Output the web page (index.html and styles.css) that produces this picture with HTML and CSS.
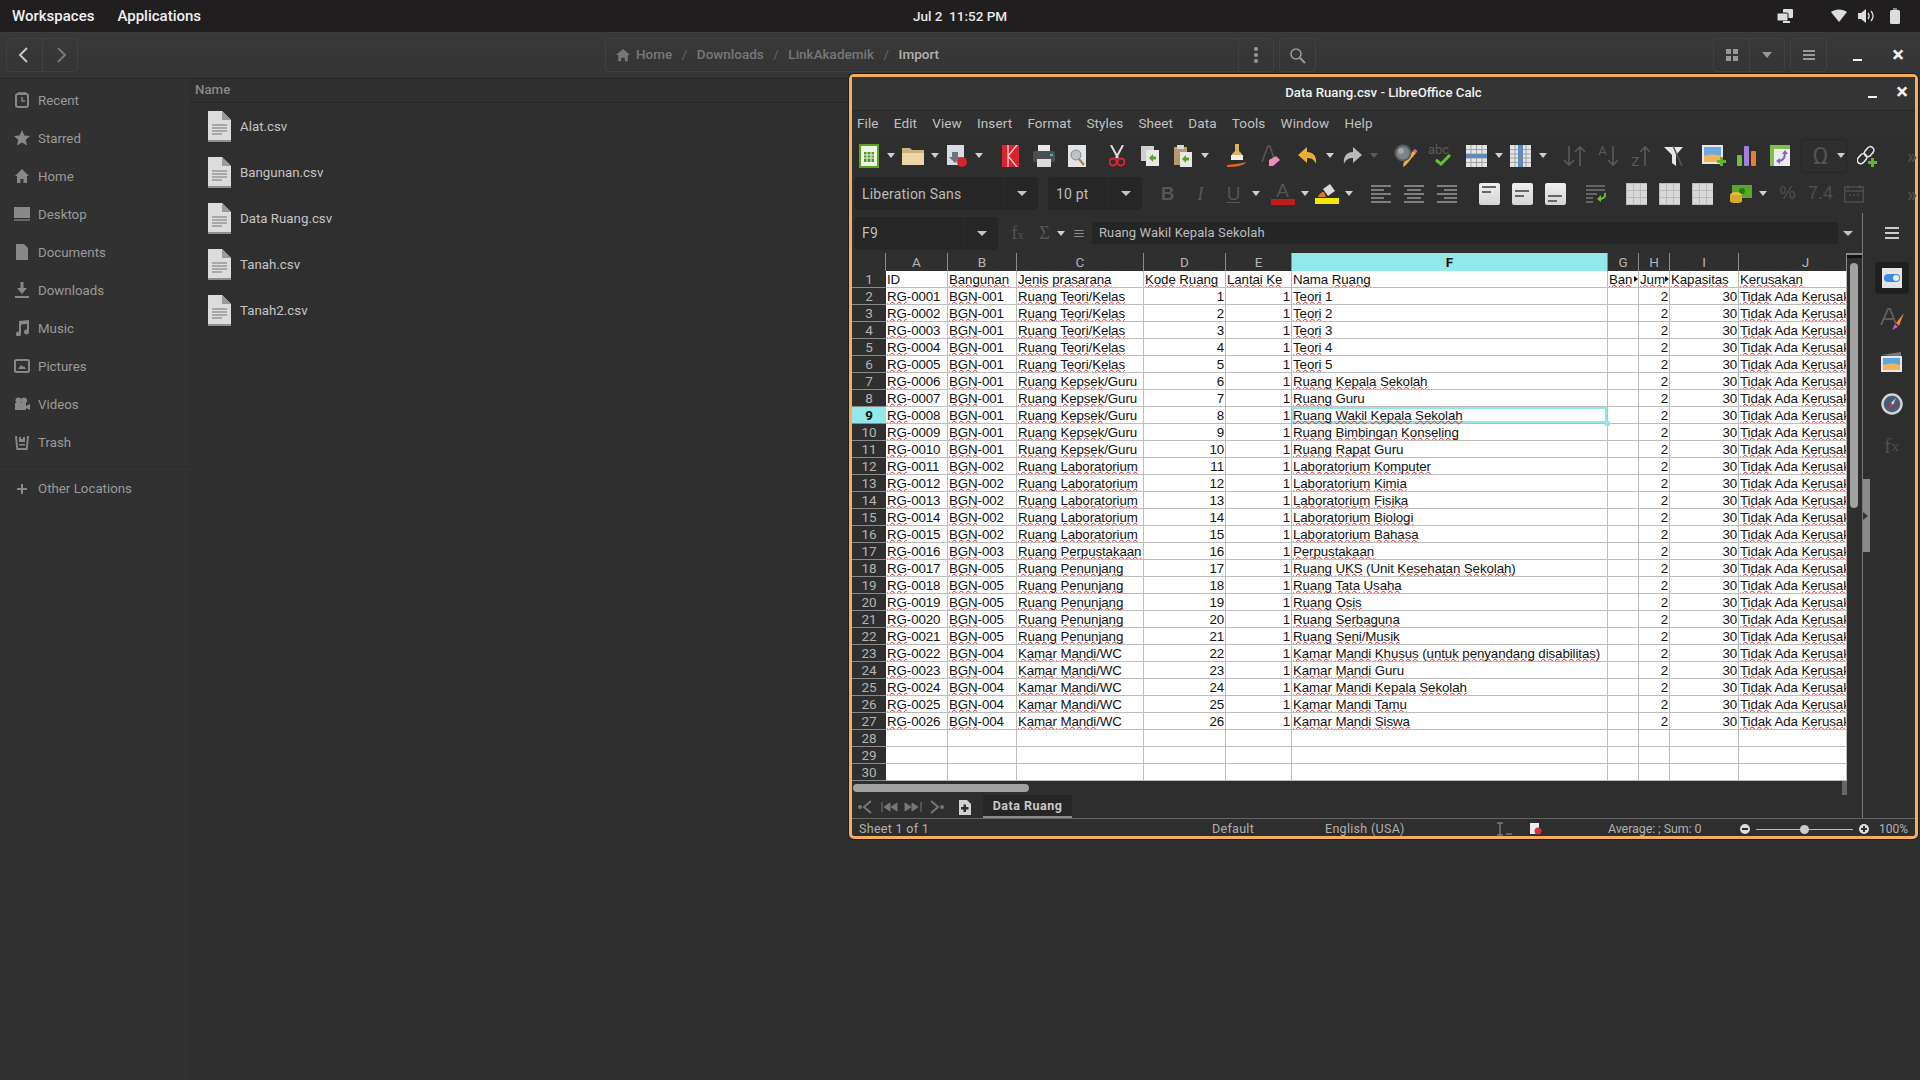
FILE: index.html
```html
<!DOCTYPE html>
<html lang="en">
<head>
  <meta charset="UTF-8">
  <title>Data Ruang.csv - LibreOffice Calc</title>
  <link rel="stylesheet" href="styles.css">
</head>
<body>
  <div class="topbar">
    <div class="top-left"><span>Workspaces</span><span>Applications</span></div>
    <div class="clock">Jul 2&nbsp; 11:52 PM</div>
    <div class="tray">
      <svg class="tray-screens" width="16" height="16" viewBox="0 0 16 16"><rect x="6" y="1" width="10" height="9" rx="1" fill="#ddd"/><rect x="0" y="5" width="11" height="8" rx="1" fill="#ddd" stroke="#201e1f"/><rect x="6" y="13" width="7" height="2" fill="#ddd"/></svg>
      <svg class="tray-wifi" width="16" height="16" viewBox="0 0 16 16"><path d="M0 4c4-3.500 12-3.500 16 0l-8 10z" fill="#ddd"/></svg>
      <svg class="tray-vol" width="17" height="16" viewBox="0 0 17 16"><path d="M0 5h3l5-4v14l-5-4H0z" fill="#ddd"/><path d="M10 5c1.500 2 1.500 4 0 6M13 3c2.500 3 2.500 7 0 10" fill="none" stroke="#ddd" stroke-width="1.300"/></svg>
      <svg class="tray-bat" width="10" height="16" viewBox="0 0 10 16"><rect x="3" y="0" width="4" height="2" fill="#888"/><rect x="0" y="2" width="10" height="14" rx="1.500" fill="#ddd"/></svg>
    </div>
  </div>

  <div class="headerbar">
    <div class="btn-group nav-btns">
      <div class="hbtn back"><svg width="12" height="18" viewBox="0 0 12 18"><path d="M10 2L3 9l7 7" fill="none" stroke="#c4c4c4" stroke-width="2"/></svg></div>
      <div class="hbtn fwd"><svg width="12" height="18" viewBox="0 0 12 18"><path d="M2 2l7 7-7 7" fill="none" stroke="#777" stroke-width="2"/></svg></div>
    </div>
    <div class="pathbar">
      <svg class="path-home" width="14" height="14" viewBox="0 0 16 16"><path d="M8 1L0 8h2.500v7H6v-4h4v4h3.500V8H16z" fill="#777"/></svg>
      <span class="crumb">Home</span><span class="slash">/</span>
      <span class="crumb">Downloads</span><span class="slash">/</span>
      <span class="crumb">LinkAkademik</span><span class="slash">/</span>
      <span class="crumb current">Import</span>
      <div class="path-menu"><svg width="6" height="18" viewBox="0 0 6 18"><circle cx="3" cy="3" r="2" fill="#999"/><circle cx="3" cy="9" r="2" fill="#999"/><circle cx="3" cy="15" r="2" fill="#999"/></svg></div>
    </div>
    <div class="btn-group search-btn"><div class="hbtn wide"><svg width="17" height="17" viewBox="0 0 17 17"><circle cx="7" cy="7" r="5" fill="none" stroke="#999" stroke-width="1.600"/><path d="M11 11l5 5" stroke="#999" stroke-width="2"/></svg></div></div>
    <div class="btn-group view-btns">
      <div class="hbtn"><svg width="12" height="12" viewBox="0 0 12 12"><rect width="5" height="5" fill="#999"/><rect x="7" width="5" height="5" fill="#999"/><rect y="7" width="5" height="5" fill="#999"/><rect x="7" y="7" width="5" height="5" fill="#999"/></svg></div>
      <div class="hbtn"><svg width="10" height="6" viewBox="0 0 10 6"><path d="M0 0h10L5 6z" fill="#999"/></svg></div>
    </div>
    <div class="btn-group menu-btn"><div class="hbtn wide"><svg width="12" height="12" viewBox="0 0 12 12"><path d="M0 1h12v2H0zM0 5h12v2H0zM0 9h12v2H0z" fill="#999"/></svg></div></div>
    <div class="wm-min"></div>
    <div class="wm-close">×</div>
  </div>

  <div class="files">
    <nav class="places">
      <div class="place"><svg width="16" height="16" viewBox="0 0 16 16"><rect x="2" y="2" width="12" height="13" rx="2" fill="none" stroke="#888" stroke-width="2"/><path d="M5 0h6v2H5zM8 5v4h3" fill="none" stroke="#888" stroke-width="1.500"/></svg>Recent</div>
      <div class="place"><svg width="16" height="16" viewBox="0 0 16 16"><path d="M8 0l2.400 5.400 5.600.6-4.200 3.800 1.200 5.800L8 12.600l-5 3 1.200-5.800L0 6l5.600-.6z" fill="#888"/></svg>Starred</div>
      <div class="place"><svg width="16" height="16" viewBox="0 0 16 16"><path d="M8 1L1 8h2v7h3.500v-4h3v4H13V8h2z" fill="#888"/></svg>Home</div>
      <div class="place"><svg width="16" height="16" viewBox="0 0 16 16"><rect y="1" width="16" height="11" fill="#888"/><rect y="13" width="16" height="2" fill="#666"/></svg>Desktop</div>
      <div class="place"><svg width="16" height="16" viewBox="0 0 16 16"><path d="M2 0h8l4 4v12H2z" fill="#888"/></svg>Documents</div>
      <div class="place"><svg width="16" height="16" viewBox="0 0 16 16"><path d="M6.500 0h3v6H13l-5 6-5-6h3.500zM1 14h14v2H1z" fill="#888"/></svg>Downloads</div>
      <div class="place"><svg width="16" height="16" viewBox="0 0 16 16"><path d="M5 1l10-1v12a2.500 2.500 0 1 1-2-2.400V4L7 4.600V14a2.500 2.500 0 1 1-2-2.400z" fill="#888"/></svg>Music</div>
      <div class="place"><svg width="16" height="16" viewBox="0 0 16 16"><rect x="1" y="2" width="14" height="12" rx="1.500" fill="none" stroke="#888" stroke-width="2"/><path d="M4 11l3-4 2 2 1-1 2 3z" fill="#888"/></svg>Pictures</div>
      <div class="place"><svg width="16" height="16" viewBox="0 0 16 16"><circle cx="4.500" cy="4.500" r="3" fill="#888"/><circle cx="10" cy="4.500" r="3" fill="#888"/><path d="M1 7h11v7H1zM12 10l4-2v6l-4-2z" fill="#888"/></svg>Videos</div>
      <div class="place"><svg width="16" height="16" viewBox="0 0 16 16"><path d="M1 2h2l1 12h8l1-12h2l-1.400 14H2.400z M5 3h2v2h2V3h2v5H5zM5 10h6v1.500H5z" fill="#888"/></svg>Trash</div>
      <div class="place other"><svg width="16" height="16" viewBox="0 0 16 16"><path d="M7 3h2v4h4v2H9v4H7V9H3V7h4z" fill="#888"/></svg>Other Locations</div>
    </nav>
    <main class="file-list">
      <div class="list-head">Name</div>
      <div class="file"><svg class="page" width="24" height="31" viewBox="0 0 24 31"><use href="#doc"/></svg>Alat.csv</div>
      <div class="file"><svg class="page" width="24" height="31" viewBox="0 0 24 31"><use href="#doc"/></svg>Bangunan.csv</div>
      <div class="file"><svg class="page" width="24" height="31" viewBox="0 0 24 31"><use href="#doc"/></svg>Data Ruang.csv</div>
      <div class="file"><svg class="page" width="24" height="31" viewBox="0 0 24 31"><use href="#doc"/></svg>Tanah.csv</div>
      <div class="file"><svg class="page" width="24" height="31" viewBox="0 0 24 31"><use href="#doc"/></svg>Tanah2.csv</div>
    </main>
  </div>

  <svg width="0" height="0" class="defs">
    <symbol id="doc" viewBox="0 0 24 31">
      <path d="M1 0h14l9 9v22H1z" fill="#dcdcdc"/>
      <path d="M1 29h23v2H1z" fill="#8e8e8e"/>
      <path d="M15 0l9 9h-9z" fill="#9a9a9a"/>
      <path d="M5 14h15M5 17h15M5 20h15M5 23h10" stroke="#777" stroke-width="1"/>
    </symbol>
  </svg>

  <!-- LibreOffice window sits on top of the file manager -->
  <section class="calc">
    <div class="calc-title">
      <span></span>
      <span class="calc-name">Data Ruang.csv - LibreOffice Calc</span>
      <div class="calc-wm"><div class="wm-min"></div><div class="wm-close">×</div></div>
    </div>
    <div class="menubar">
      <span>File</span><span>Edit</span><span>View</span><span>Insert</span><span>Format</span><span>Styles</span><span>Sheet</span><span>Data</span><span>Tools</span><span>Window</span><span>Help</span>
    </div>

    <div class="toolbar">
      <div class="tb"><svg width="20" height="24" viewBox="0 0 20 24"><rect x="1" y="1" width="18" height="22" fill="#eef5e6" stroke="#5aa51e" stroke-width="2"/><path d="M5 8h10v10H5z" fill="#4e9a28"/><path d="M5 11h10M5 14h10M8 8v10M12 8v10" stroke="#eef5e6"/></svg></div><div class="arr"></div>
      <div class="tb"><svg width="24" height="20" viewBox="0 0 24 20"><path d="M1 2h8l2 2h12v15H1z" fill="#cdb17f"/><path d="M1 7h22v12H1z" fill="#ecd6a8"/></svg></div><div class="arr"></div>
      <div class="tb"><svg width="24" height="24" viewBox="0 0 24 24"><rect x="2" y="1" width="17" height="20" fill="#d8dde3"/><path d="M7 8h6v5h3l-6 6-6-6h3z" fill="#6b7580"/><circle cx="17" cy="18" r="5" fill="#d8232f"/></svg></div><div class="arr"></div>
      <div class="sep"></div>
      <div class="tb"><svg width="17" height="22" viewBox="0 0 17 22"><rect width="17" height="22" fill="#d92532"/><path d="M6 0v22M6 11L15 0M6 11l9 11" fill="none" stroke="#f4d9d9" stroke-width="1.200"/></svg></div>
      <div class="tb"><svg width="22" height="22" viewBox="0 0 22 22"><rect x="5" y="0" width="12" height="7" fill="#e8e8e8"/><rect y="6" width="22" height="11" rx="2" fill="#4a4f54"/><rect x="17" y="9" width="3" height="2" fill="#31c4c9"/><rect x="4" y="14" width="14" height="8" fill="#dcdcdc"/></svg></div>
      <div class="tb"><svg width="18" height="22" viewBox="0 0 18 22"><rect width="18" height="22" fill="#e4e4e4"/><circle cx="8" cy="10" r="5" fill="#bcc3c9" stroke="#8a8a8a"/><path d="M11 14l5 6" stroke="#a57c4b" stroke-width="2"/></svg></div>
      <div class="sep7"></div>
      <div class="tb"><svg width="16" height="22" viewBox="0 0 16 22"><path d="M2 0l7 13M14 0L7 13" stroke="#dcdcdc" stroke-width="2"/><circle cx="4" cy="17" r="3.500" fill="none" stroke="#d92532" stroke-width="2"/><circle cx="12" cy="17" r="3.500" fill="none" stroke="#d92532" stroke-width="2"/></svg></div>
      <div class="tb"><svg width="18" height="20" viewBox="0 0 18 20"><rect width="13" height="15" fill="#cfcfcf"/><rect x="5" y="4" width="13" height="16" fill="#e8e8e8"/><path d="M8 12l4-4v2.500h3v3h-3V16z" fill="#58a12b"/></svg></div>
      <div class="tb"><svg width="18" height="22" viewBox="0 0 18 22"><rect y="2" width="13" height="18" fill="#b79a6a"/><rect x="3" y="0" width="7" height="4" fill="#d6d6d6"/><rect x="6" y="7" width="12" height="15" fill="#e8e8e8"/><path d="M8 14l4-4v2.500h3v3h-3V18z" fill="#58a12b"/></svg></div><div class="arr"></div>
      <div class="sep"></div>
      <div class="tb"><svg width="20" height="24" viewBox="0 0 20 24"><path d="M8 0h4v7l3 3v5H5v-5l3-3z" fill="#d9b45c"/><rect x="4" y="11" width="12" height="5" fill="#eee"/><path d="M0 21c5-1 12-1 19-3-2 4-10 5-19 5z" fill="#e0651c"/></svg></div>
      <div class="tb"><svg width="20" height="22" viewBox="0 0 20 22"><path d="M2 17L8 1h2l5 16" fill="none" stroke="#5a5a5a" stroke-width="1.500"/><path d="M9 15l7-4 4 4-7 6H9z" fill="#f08ac0"/></svg></div>
      <div class="gap"></div>
      <div class="tb"><svg width="22" height="20" viewBox="0 0 22 20"><path d="M10 1L1 9l9 8v-5c4 0 7 1 9 6 1-8-3-12-9-12z" fill="#e9b031"/></svg></div><div class="arr"></div>
      <div class="tb"><svg width="22" height="20" viewBox="0 0 22 20"><path d="M12 1l9 8-9 8v-5c-4 0-7 1-9 6-1-8 3-12 9-12z" fill="#b9b9b9"/></svg></div><div class="arr dim"></div>
      <div class="sep"></div>
      <div class="tb"><svg width="24" height="24" viewBox="0 0 24 24"><path d="M22 9L12 21l-3 2 .5-4L19 7z" fill="#eeb13d"/><path d="M19 7l3 2 1.500-2-3-2z" fill="#e86a9a"/><circle cx="9" cy="9" r="7.500" fill="#7d8388" stroke="#5c5c5c" stroke-width="2"/><circle cx="7" cy="7" r="3" fill="#a0a6ab"/></svg></div>
      <div class="tb tb-spell"><span class="abc">abc</span><svg width="16" height="12" viewBox="0 0 16 12"><path d="M1 6l5 4 9-9" fill="none" stroke="#6cc02c" stroke-width="3"/></svg></div>
      <div class="gap"></div>
      <div class="tb"><svg width="21" height="22" viewBox="0 0 21 22"><rect width="21" height="22" fill="#e4e4e4"/><rect y="9" width="21" height="4" fill="#4d8bd6"/><path d="M0 4.500h21M0 9h21M0 13h21M0 17.500h21M5 0v22M10.500 0v22M16 0v22" stroke="#8a8a8a" stroke-width=".700"/></svg></div><div class="arr"></div>
      <div class="tb"><svg width="21" height="22" viewBox="0 0 21 22"><rect width="21" height="22" fill="#e4e4e4"/><rect x="8" width="5" height="22" fill="#4d8bd6"/><path d="M0 4.500h21M0 9h21M0 13h21M0 17.500h21M5 0v22M10.500 0v22M16 0v22" stroke="#8a8a8a" stroke-width=".700"/></svg></div><div class="arr"></div>
      <div class="sep"></div>
      <div class="tb"><svg width="24" height="22" viewBox="0 0 24 22"><path d="M6 1v19M1 15l5 5 5-5M17 21V2M12 7l5-5 5 5" fill="none" stroke="#5a5a5a" stroke-width="1.600"/></svg></div>
      <div class="tb tb-sort"><span>A</span><svg width="12" height="22" viewBox="0 0 12 22"><path d="M6 1v19M1 15l5 5 5-5" fill="none" stroke="#5a5a5a" stroke-width="1.600"/></svg></div>
      <div class="tb tb-sort"><span class="low">Z</span><svg width="12" height="22" viewBox="0 0 12 22"><path d="M6 21V2M1 7l5-5 5 5" fill="none" stroke="#5a5a5a" stroke-width="1.600"/></svg></div>
      <div class="tb"><svg width="20" height="20" viewBox="0 0 20 20"><path d="M0 1h19l-7 8v11l-4-3V9z" fill="#e6e6e6"/><path d="M9 0l9 20" stroke="#555" stroke-width="1.500"/></svg></div>
      <div class="sep7"></div>
      <div class="tb"><svg width="24" height="22" viewBox="0 0 24 22"><rect x="0" y="0" width="21" height="19" fill="#e8e8e8"/><rect x="2" y="2" width="17" height="15" fill="#6aaae0"/><path d="M2 11c6-2 11-2 17 0v6H2z" fill="#efb45c"/><path d="M18 12h3v3h3v3h-3v3h-3v-3h-3v-3h3z" fill="#62b62e"/></svg></div>
      <div class="tb"><svg width="20" height="20" viewBox="0 0 20 20"><rect y="9" width="5" height="11" rx="1" fill="#6fbf3a"/><rect x="7" y="0" width="5" height="20" rx="1" fill="#a67ee0"/><rect x="14" y="5" width="5" height="15" rx="1" fill="#e8802a"/></svg></div>
      <div class="tb"><svg width="20" height="21" viewBox="0 0 20 21"><rect width="20" height="21" fill="#ececec"/><path d="M0 0h20v4H0zM0 0h4v21H0z" fill="#7fbf4d"/><path d="M8 16c5 0 7-3 7-8" fill="none" stroke="#8b5fd0" stroke-width="2"/><path d="M12 9l3-4 3 4zM10 13v6l-4-3z" fill="#8b5fd0"/></svg></div>
      <div class="gap"></div>
      <div class="omega"><span class="omega-sign">Ω</span><div class="arr"></div></div>
      <div class="tb tb-last"><svg width="22" height="22" viewBox="0 0 22 22"><rect x="9" y="1" width="7" height="11" rx="3.500" transform="rotate(40 12 6)" fill="none" stroke="#e6e6e6" stroke-width="1.600"/><rect x="2" y="8" width="7" height="11" rx="3.500" transform="rotate(40 5 13)" fill="none" stroke="#e6e6e6" stroke-width="1.600"/><path d="M14 13h3v3h3v3h-3v3h-3v-3h-3v-3h3z" fill="#62b62e"/></svg></div>
      <div class="more">»</div>
    </div>

    <div class="toolbar toolbar2">
      <div class="combo font-box"><span>Liberation Sans</span><i></i></div>
      <div class="combo size-box"><span>10 pt</span><i></i></div>
      <div class="tb fmt bold">B</div>
      <div class="tb fmt ital">I</div>
      <div class="tb fmt undl">U</div><div class="arr"></div>
      <div class="gap"></div>
      <div class="tb color"><span class="fmt">A</span><b class="swatch red"></b></div><div class="arr"></div>
      <div class="tb color"><svg width="20" height="14" viewBox="0 0 20 14"><path d="M6 5l7-5 5 7-7 5z" fill="#d9d9d9"/><path d="M1 13c1-3 3-5 6-5l2 5z" fill="#e0762a"/></svg><b class="swatch yellow"></b></div><div class="arr"></div>
      <div class="sep"></div>
      <div class="tb"><svg width="20" height="18" viewBox="0 0 20 18"><path d="M0 1h20M0 5h13M0 9h20M0 13h13M0 17h20" stroke="#999" stroke-width="1.500"/></svg></div>
      <div class="tb"><svg width="20" height="18" viewBox="0 0 20 18"><path d="M0 1h20M3 5h14M0 9h20M3 13h14M0 17h20" stroke="#999" stroke-width="1.500"/></svg></div>
      <div class="tb"><svg width="20" height="18" viewBox="0 0 20 18"><path d="M0 1h20M7 5h13M0 9h20M7 13h13M0 17h20" stroke="#999" stroke-width="1.500"/></svg></div>
      <div class="sep"></div>
      <div class="tb"><div class="vbox top"><s></s><s></s></div></div>
      <div class="tb"><div class="vbox mid"><s></s><s></s></div></div>
      <div class="tb"><div class="vbox bot"><s></s><s></s></div></div>
      <div class="sep7"></div>
      <div class="tb"><svg width="20" height="18" viewBox="0 0 20 18"><path d="M0 1h19M0 5h19M0 9h11M0 13h7M0 17h7" stroke="#777" stroke-width="1.500"/><path d="M19 8c1 4-2 6-6 6" fill="none" stroke="#6cc02c" stroke-width="2"/><path d="M15 10l-4 4 4 3z" fill="#6cc02c"/></svg></div>
      <div class="sep8"></div>
      <div class="tb"><div class="cellbox"></div></div>
      <div class="tb"><div class="cellbox"></div></div>
      <div class="tb"><div class="cellbox"></div></div>
      <div class="gap"></div>
      <div class="tb"><svg width="22" height="18" viewBox="0 0 22 18"><rect x="2" y="0" width="20" height="13" fill="#56a72c"/><circle cx="12" cy="6" r="3" fill="#2f7418"/><ellipse cx="6" cy="10" rx="6" ry="3" fill="#e5bd43"/><path d="M0 10v6c0 3 12 3 12 0v-6z" fill="#d8a92e"/></svg></div><div class="arr"></div>
      <div class="tb dim-text pct">%</div>
      <div class="tb dim-text">7.4</div>
      <div class="tb"><svg width="20" height="18" viewBox="0 0 20 18"><rect x=".7" y="2" width="18.600" height="15" fill="none" stroke="#4f4f4f" stroke-width="1.400"/><path d="M4 0v4M16 0v4M0 6h20M5 10h2M9 10h2M13 10h2" stroke="#4f4f4f" stroke-width="1.400"/></svg></div>
      <div class="more">»</div>
    </div>

    <div class="work">
      <div class="work-main">
        <div class="formula">
          <div class="combo name-box"><span>F9</span><i></i></div>
          <span class="fx-btn fx">f<small>x</small></span>
          <span class="fx-btn sum">Σ</span>
          <div class="arr"></div>
          <span class="fx-btn eq">≡</span>
          <div class="fx-input">Ruang Wakil Kepala Sekolah</div>
          <div class="fx-drop"></div>
        </div>
        <div class="sheet-row">
          <table class="sheet" id="sheet"></table>
          <div class="vscroll"><div class="split-v"></div><div class="vthumb"></div></div>
        </div>
        <div class="hscroll"><div class="hthumb"></div><div class="split-h"></div></div>
        <div class="tabs">
          <svg width="86" height="14" viewBox="0 0 86 14"><circle cx="2" cy="7" r="2" fill="#777"/><path d="M13 1L6 7l7 6" fill="none" stroke="#777" stroke-width="2"/><path d="M24 2v10M32 3l-6 4 6 4zM39 3l-6 4 6 4z" fill="#777" stroke="#777"/><path d="M47 3l6 4-6 4zM54 3l6 4-6 4zM63 2v10" fill="#777" stroke="#777"/><path d="M73 1l7 6-7 6" fill="none" stroke="#777" stroke-width="2"/><circle cx="84" cy="7" r="2" fill="#777"/></svg>
          <svg class="tab-add" width="13" height="15" viewBox="0 0 13 15"><path d="M1 0h8l4 4v11H1z" fill="#d2d2d2"/><path d="M5.500 4.500h2.500v2.500h2.500v2.500H8V12H5.500V9.500H3V7h2.500z" fill="#2e2e2e"/></svg>
          <div class="tab">Data Ruang</div>
        </div>
      </div>
      <aside class="deck">
        <svg class="deck-menu" width="14" height="12" viewBox="0 0 14 12"><path d="M0 0h14v2H0zM0 5h14v2H0zM0 10h14v2H0z" fill="#ccc"/></svg>
        <div class="deck-tab active"><svg width="20" height="20" viewBox="0 0 20 20"><rect width="20" height="20" fill="#e4e4e4"/><rect x="2" y="6" width="16" height="8" rx="4" fill="#3d8bdc"/><circle cx="14" cy="10" r="3" fill="#eee"/></svg></div>
        <div class="deck-tab"><svg width="24" height="26" viewBox="0 0 24 26"><path d="M1 18L8 2h2l6 15M4 12h9" fill="none" stroke="#5c5c5c" stroke-width="2"/><path d="M24 6l-8 10 3 3z" fill="#e28a3d"/><path d="M15 17l3 3-6 3z" fill="#c65ac0"/></svg></div>
        <div class="deck-tab"><svg width="22" height="20" viewBox="0 0 22 20"><path d="M0 3l20-3v5z" fill="#777"/><rect y="4" width="21" height="16" fill="#e8e8e8"/><rect x="2" y="6" width="17" height="12" fill="#5ca5de"/><path d="M2 13c6-2 11-2 17 0v5H2z" fill="#efb45c"/></svg></div>
        <div class="deck-tab"><svg width="22" height="22" viewBox="0 0 22 22"><circle cx="11" cy="11" r="9.500" fill="#4a5a78" stroke="#d2d2d2" stroke-width="2.500"/><path d="M15 5l-3 7-2-2z" fill="#d9d9d9"/><path d="M7 17l3-7 2 2z" fill="#d8382e"/></svg></div>
        <div class="deck-tab fx-dim">f<small>x</small></div>
        <div class="deck-handle"></div>
      </aside>
    </div>

    <div class="statusbar">
      <span>Sheet 1 of 1</span>
      <span>Default</span>
      <span>English (USA)</span>
      <span class="st-ins"><svg width="16" height="14" viewBox="0 0 16 14"><path d="M1 1h6M4 1v12M1 13h6M10 12h6" stroke="#999" fill="none"/></svg></span>
      <span class="st-doc"><svg width="12" height="12" viewBox="0 0 12 12"><rect width="9" height="11" fill="#eee"/><circle cx="8" cy="8" r="3.500" fill="#d8323c"/></svg></span>
      <span class="st-sum">Average: ; Sum: 0</span>
      <div class="zoom-ctl">
        <svg width="10" height="10" viewBox="0 0 10 10"><circle cx="5" cy="5" r="5" fill="#ddd"/><path d="M2 4h6v2H2z" fill="#2e2e2e"/></svg>
        <div class="slider"><b></b></div>
        <svg width="10" height="10" viewBox="0 0 10 10"><circle cx="5" cy="5" r="5" fill="#ddd"/><path d="M2 4h2V2h2v2h2v2H6v2H4V6H2z" fill="#2e2e2e"/></svg>
      </div>
      <span class="st-pct">100%</span>
    </div>
  </section>

  <script src="script.js"></script>
</body>
</html>
```

FILE: styles.css
```css
* { box-sizing: border-box; }
html, body { margin: 0; height: 100%; }
body { width: 1920px; height: 1080px; overflow: hidden; background: #2f2f2f; color: #999; font-family: Roboto, "Noto Sans", sans-serif; font-size: 14px; display: flex; flex-direction: column; }
svg { display: block; flex: none; }
.defs { position: absolute; }

/* gnome panel */
.topbar { height: 32px; flex: none; background: #201e1f; color: #f0f0f0; font-size: 15px; font-weight: 500; display: grid; grid-template-columns: 1fr auto 1fr; align-items: center; padding: 0 12px; }
.top-left { display: flex; gap: 23px; }
.clock { font-size: 13.5px; color: #e8e8e8; }
.tray { display: flex; align-items: center; justify-content: flex-end; padding-right: 8px; }
.tray-wifi { margin-left: 38px; }
.tray-vol { margin-left: 11px; }
.tray-bat { margin-left: 15px; }

/* nautilus header */
.headerbar { height: 47px; flex: none; background: linear-gradient(#393939, #343434); border-top: 1px solid #3c3c3c; border-bottom: 1px solid #262626; display: flex; align-items: center; padding: 0 0 1px 6px; }
.btn-group { height: 34px; display: flex; border: 1px solid #414141; border-radius: 4px; }
.hbtn { width: 35px; display: flex; align-items: center; justify-content: center; }
.hbtn + .hbtn { border-left: 1px solid #414141; }
.hbtn.back { padding-right: 3px; }
.hbtn.fwd { padding-left: 3px; }
.pathbar { width: 669px; height: 34px; margin-left: 527px; border: 1px solid #414141; border-radius: 4px; display: flex; align-items: center; padding-left: 10px; font-size: 13.5px; font-weight: 500; color: #777; }
.crumb { margin-bottom: 2px; }
.path-home { margin-right: 6px; }
.slash { margin: 0 9.5px 2px; color: #666; font-weight: 400; }
.crumb.current { color: #b0b0b0; }
.path-menu { margin-left: auto; width: 35px; height: 100%; border-left: 1px solid #414141; display: flex; align-items: center; justify-content: center; }
.search-btn { margin-left: 5px; }
.view-btns { margin-left: 397px; }
.menu-btn { margin-left: 5px; }
.wm-min { width: 9px; height: 2px; background: #f0f0f0; margin: 10px 0 0 26px; flex: none; }
.wm-close { width: 30px; margin-left: 21px; color: #f4f4f4; font-size: 22px; font-weight: 700; line-height: 22px; text-align: center; }

/* nautilus body */
.files { flex: 1; display: flex; min-height: 0; }
.places { width: 190px; flex: none; background: #313131; padding-top: 2px; }
.place { height: 38px; display: flex; align-items: center; gap: 8px; padding-left: 14px; color: #9a9a9a; font-size: 13.3px; }
.place.other { margin-top: 5px; border-top: 1px solid #2b2b2b; height: 44px; }
.file-list { flex: 1; background: #2f2f2f; font-size: 13.3px; }
.list-head { height: 24px; padding-left: 5px; border-bottom: 1px solid #282828; font-weight: 500; color: #888; line-height: 22px; }
.file { height: 46px; display: flex; align-items: center; padding-left: 17px; gap: 9px; color: #c4c4c4; }

/* calc window */
.calc { position: absolute; left: 849px; top: 74px; width: 1069px; height: 765px; border: 3px solid #f5ae5e; border-radius: 5px; background: #2e2e2e; display: flex; flex-direction: column; box-shadow: 0 0 0 1px #1d1d1d; color: #bcbcbc; }
.calc-title { height: 34px; flex: none; display: grid; grid-template-columns: 1fr auto 1fr; align-items: center; padding-bottom: 3px; background: #343434; border-bottom: 1px solid #262626; }
.calc-name { color: #f0f0f0; font-weight: 500; font-size: 13.2px; }
.calc-wm { display: flex; justify-content: flex-end; align-items: center; }
.calc-wm .wm-min { margin: 10px 0 0 0; }
.calc-wm .wm-close { margin-left: 10px; margin-right: -2px; }
.menubar { height: 24px; flex: none; display: flex; align-items: center; padding-left: 5px; background: #303030; font-size: 13.5px; letter-spacing: .1px; color: #c0c0c0; }
.menubar span { margin-right: 15.2px; }

.toolbar { height: 41px; flex: none; display: flex; align-items: center; background: #2e2e2e; position: relative; }
.toolbar2 { height: 37px; padding: 0 0 2px 2px; }
.tb { width: 33px; height: 32px; flex: none; display: flex; align-items: center; justify-content: center; position: relative; }
.arr { width: 11px; flex: none; display: flex; align-items: center; justify-content: center; }
.arr::before { content: ""; border: 4px solid transparent; border-top: 5px solid #d0d0d0; border-bottom: 0; }
.arr.dim::before { border-top-color: #5c5c5c; }
.sep { width: 10px; flex: none; }
.sep8 { width: 8px; flex: none; }
.sep7 { width: 7px; flex: none; }
.gap { width: 5px; flex: none; }
.more { position: absolute; left: 1055px; color: #4e4e4e; font-size: 20px; font-weight: 700; }
.tb-spell { flex-direction: column; }
.abc { color: #5a5a5a; font-size: 13px; line-height: 10px; }
.tb-spell svg { margin: -1px 0 0 8px; }
.tb-sort span { color: #5a5a5a; font-size: 13px; align-self: flex-start; margin: 3px 0 0 2px; }
.tb-sort span.low { align-self: flex-end; margin: 0 0 3px 2px; }
.omega { width: 46px; height: 34px; flex: none; display: flex; align-items: center; border: 1px solid #262626; border-radius: 4px; padding-left: 4px; }
.omega-sign { color: #555; font-size: 24px; width: 29px; text-align: center; }
.tb-last { margin-left: 4px; }

.combo { height: 33px; flex: none; background: #262626; border-radius: 4px; display: flex; align-items: center; justify-content: space-between; font-size: 14px; letter-spacing: .2px; color: #bcbcbc; }
.combo span { padding-left: 8px; }
.combo i { width: 34px; height: 100%; border-left: 1px solid #2c2c2c; display: flex; align-items: center; justify-content: center; }
.combo i::before { content: ""; border: 5px solid transparent; border-top: 5px solid #c4c4c4; border-bottom: 0; }
.font-box { width: 184px; }
.size-box { width: 94px; margin: 0 9px 0 10px; }
.fmt { color: #555; font-family: "Liberation Sans", sans-serif; font-size: 19px; }
.bold { font-weight: 700; }
.ital { font-style: italic; font-family: "Liberation Serif", serif; }
.undl { text-decoration: underline; text-underline-offset: 2px; }
.color { flex-direction: column; }
.color .fmt { line-height: 17px; }
.swatch { width: 24px; height: 6px; display: block; }
.swatch.red { background: #c01c1c; }
.swatch.yellow { background: #f7e600; }
.vbox { width: 21px; height: 22px; border-radius: 2px; background: linear-gradient(#f0f0f0, #d4d4d4); display: flex; flex-direction: column; gap: 3px; padding: 3px; }
.vbox.mid { justify-content: center; }
.vbox.bot { justify-content: flex-end; }
.vbox s { display: block; height: 2px; width: 14px; background: #666; }
.vbox s + s { width: 9px; }
.cellbox { width: 21px; height: 22px; background: #d8d8d8; background-image: linear-gradient(#bbb 1px, transparent 1px), linear-gradient(90deg, #bbb 1px, transparent 1px); background-size: 7px 7px; }
.dim-text { color: #4e4e4e; font-family: "Liberation Sans", sans-serif; font-size: 18px; }
.pct { margin-left: 3px; }

.work { flex: 1; min-height: 0; display: flex; }
.work-main { width: 1010px; flex: none; display: flex; flex-direction: column; }
.formula { height: 40px; flex: none; display: flex; align-items: center; padding-left: 2px; }
.name-box { width: 144px; margin-right: 7px; }
.fx-btn { color: #555; font-family: "Liberation Serif", serif; font-size: 18px; width: 25px; text-align: center; }
.fx-btn small { font-size: 12px; }
.sum { width: 29px; }
.eq { width: 26px; font-size: 20px; color: #888; margin-left: 2px; }
.formula .arr { margin-left: -4px; margin-right: -2px; }
.fx-input { width: 746px; height: 22px; background: #252525; padding-left: 7px; font-size: 13px; letter-spacing: .1px; line-height: 21px; color: #bcbcbc; }
.fx-drop { width: 20px; display: flex; justify-content: center; }
.fx-drop::before { content: ""; border: 5px solid transparent; border-top: 5px solid #c4c4c4; border-bottom: 0; }

.sheet-row { height: 528px; flex: none; display: flex; }
.sheet { width: 995px; flex: none; border-spacing: 0; table-layout: fixed; background: #fff; color: #111; font-family: "Liberation Sans", Arial, sans-serif; font-size: 13.33px; letter-spacing: -.1px; }
.sheet th { height: 18px; padding: 0; background: #2f2f2f; color: #b4b4b4; font-family: Roboto, sans-serif; font-size: 13.5px; font-weight: 400; letter-spacing: 0; border-right: 1px solid #8a8a8a; line-height: 15px; overflow: hidden; }
.sheet th.row-no { height: 17px; border-right: 0; border-bottom: 1px solid #8a8a8a; }
.sheet th.on { background: #93e9ea; color: #111; font-weight: 700; }
.sheet th.far { padding-left: 26px; }
.sheet td { height: 17px; padding: 2px 1px 0 1px; border-right: 1px solid #bdbdbd; border-bottom: 1px solid #bdbdbd; white-space: nowrap; overflow: hidden; line-height: 14px; }
.sheet td.num { text-align: right; }
.sheet td.clip { position: relative; overflow: hidden; }
.sheet td.clip::after { content: ""; position: absolute; right: 0; top: 5px; border: 3px solid transparent; border-left: 4px solid #111; border-right: 0; }
.sheet td.cur { position: relative; overflow: visible; box-shadow: inset 0 0 0 2px #93e9ea; }
.sheet td.cur::after { content: ""; position: absolute; right: -3px; bottom: -3px; width: 5px; height: 5px; background: #93e9ea; }
.sp { text-decoration: underline wavy #e0201c; text-decoration-thickness: 1.2px; text-underline-offset: 0; text-decoration-skip-ink: none; }

.vscroll { flex: 1; position: relative; }
.split-v { height: 5px; background: #111; border-top: 2px solid #888; margin-bottom: 5px; }
.vthumb { width: 8px; height: 245px; margin-left: 3px; background: #a2a2a2; border-radius: 4px; }
.hscroll { height: 14px; flex: none; display: flex; justify-content: space-between; width: 995px; }
.hthumb { width: 176px; height: 8px; margin: 3px 0 0 1px; background: #a2a2a2; border-radius: 4px; }
.split-h { width: 5px; height: 14px; background: #666; }
.tabs { flex: 1; display: flex; align-items: center; padding-left: 6px; }
.tab-add { margin-left: 14px; }
.tab { width: 89px; height: 100%; margin-left: 12px; background: #262626; border-bottom: 3px solid #8a8a8a; color: #c8c8c8; font-size: 12.5px; font-weight: 700; letter-spacing: .5px; text-align: center; line-height: 21px; }

.deck { flex: 1; border-left: 1px solid #777; position: relative; display: flex; flex-direction: column; align-items: center; }
.deck-menu { margin: 14px 0 23px 5px; }
.deck-tab { width: 34px; height: 32px; margin-bottom: 10px; margin-left: 5px; border-radius: 3px; display: flex; align-items: center; justify-content: center; }
.deck-tab.active { background: #1f1f1f; }
.fx-dim { color: #4e4e4e; font-family: "Liberation Serif", serif; font-size: 22px; }
.fx-dim small { font-size: 15px; }
.deck-handle { position: absolute; left: 0; top: 266px; width: 7px; height: 73px; background: #8a8a8a; display: flex; align-items: center; }
.deck-handle::before { content: ""; border: 4px solid transparent; border-left: 5px solid #333; border-right: 0; }

.statusbar { height: 18px; flex: none; padding-top: 3px; border-top: 1px solid #666; display: grid; grid-template-columns: 360px 113px 171px 34px 78px 132px 139px 1fr; align-items: center; font-size: 12.5px; letter-spacing: .3px; color: #b0b0b0; line-height: 14px; }
.statusbar > span:first-child { padding-left: 7px; }
.st-sum { letter-spacing: -.1px; }
.st-pct { font-size: 12px; letter-spacing: 0; }
.zoom-ctl { display: flex; align-items: center; gap: 6px; }
.slider { width: 97px; height: 1px; background: #bbb; position: relative; }
.slider b { position: absolute; left: 44px; top: -4px; width: 9px; height: 9px; border-radius: 50%; background: #ccc; }
```

FILE: script.js
```javascript
// build the sheet from its data, the misspelled words get the red wave
const misspelled = /\b(RG|BGN|Bangunan|Jenis|prasarana|Kode|Ruang|Lantai|Ke|Ban|Jum|Kapasitas|Kerusakan|Teori|Kelas|Kepsek|Laboratorium|Perpustakaan|Penunjang|Kamar|Mandi|Kepala|Sekolah|Wakil|Bimbingan|Konseling|Rapat|Komputer|Kimia|Fisika|Biologi|Bahasa|UKS|Kesehatan|Tata|Usaha|Osis|Serbaguna|Seni|Musik|Khusus|untuk|penyandang|disabilitas|Tamu|Siswa|Tidak)\b/g;

const widths = [34, 62, 69, 127, 82, 66, 316, 31, 31, 69, 108];
const letters = ['', 'A', 'B', 'C', 'D', 'E', 'F', 'G', 'H', 'I', 'J'];

const names = ['Teori 1', 'Teori 2', 'Teori 3', 'Teori 4', 'Teori 5', 'Ruang Kepala Sekolah', 'Ruang Guru', 'Ruang Wakil Kepala Sekolah', 'Ruang Bimbingan Konseling', 'Ruang Rapat Guru', 'Laboratorium Komputer', 'Laboratorium Kimia', 'Laboratorium Fisika', 'Laboratorium Biologi', 'Laboratorium Bahasa', 'Perpustakaan', 'Ruang UKS (Unit Kesehatan Sekolah)', 'Ruang Tata Usaha', 'Ruang Osis', 'Ruang Serbaguna', 'Ruang Seni/Musik', 'Kamar Mandi Khusus (untuk penyandang disabilitas)', 'Kamar Mandi Guru', 'Kamar Mandi Kepala Sekolah', 'Kamar Mandi Tamu', 'Kamar Mandi Siswa'];

function building(i) {
  if (i < 10) return 'BGN-001';
  if (i < 15) return 'BGN-002';
  if (i < 16) return 'BGN-003';
  if (i < 21) return 'BGN-005';
  return 'BGN-004';
}

function roomType(i) {
  if (i < 5) return 'Ruang Teori/Kelas';
  if (i < 10) return 'Ruang Kepsek/Guru';
  if (i < 15) return 'Ruang Laboratorium';
  if (i < 16) return 'Ruang Perpustakaan';
  if (i < 21) return 'Ruang Penunjang';
  return 'Kamar Mandi/WC';
}

function mark(text) {
  return text.replace(misspelled, '<span class="sp">$1</span>');
}

function cell(text, cls) {
  return '<td' + (cls ? ' class="' + cls + '"' : '') + '>' + mark(text) + '</td>';
}

function headCell(letter) {
  let cls = '';
  if (letter === 'F') cls = ' class="on"';
  if (letter === 'J') cls = ' class="far"';
  return '<th' + cls + '>' + letter + '</th>';
}

let html = '<colgroup>' + widths.map(w => '<col style="width:' + w + 'px">').join('') + '</colgroup>';
html += '<tr>' + letters.map(headCell).join('') + '</tr>';
html += '<tr><th class="row-no">1</th>' + cell('ID') + cell('Bangunan') + cell('Jenis prasarana') + cell('Kode Ruang') + cell('Lantai Ke') + cell('Nama Ruang') + cell('Ban', 'clip') + cell('Jum', 'clip') + cell('Kapasitas') + cell('Kerusakan') + '</tr>';

names.forEach((name, i) => {
  const no = i + 2;
  html += '<tr><th class="row-no' + (no === 9 ? ' on' : '') + '">' + no + '</th>'
    + cell('RG-' + String(i + 1).padStart(4, '0'))
    + cell(building(i))
    + cell(roomType(i))
    + cell(String(i + 1), 'num')
    + cell('1', 'num')
    + cell(name, no === 9 ? 'cur' : '')
    + cell('')
    + cell('2', 'num')
    + cell('30', 'num')
    + cell('Tidak Ada Kerusakan')
    + '</tr>';
});

for (let no = 28; no <= 30; no++) {
  html += '<tr><th class="row-no">' + no + '</th>' + '<td></td>'.repeat(10) + '</tr>';
}

document.getElementById('sheet').innerHTML = html;
```
